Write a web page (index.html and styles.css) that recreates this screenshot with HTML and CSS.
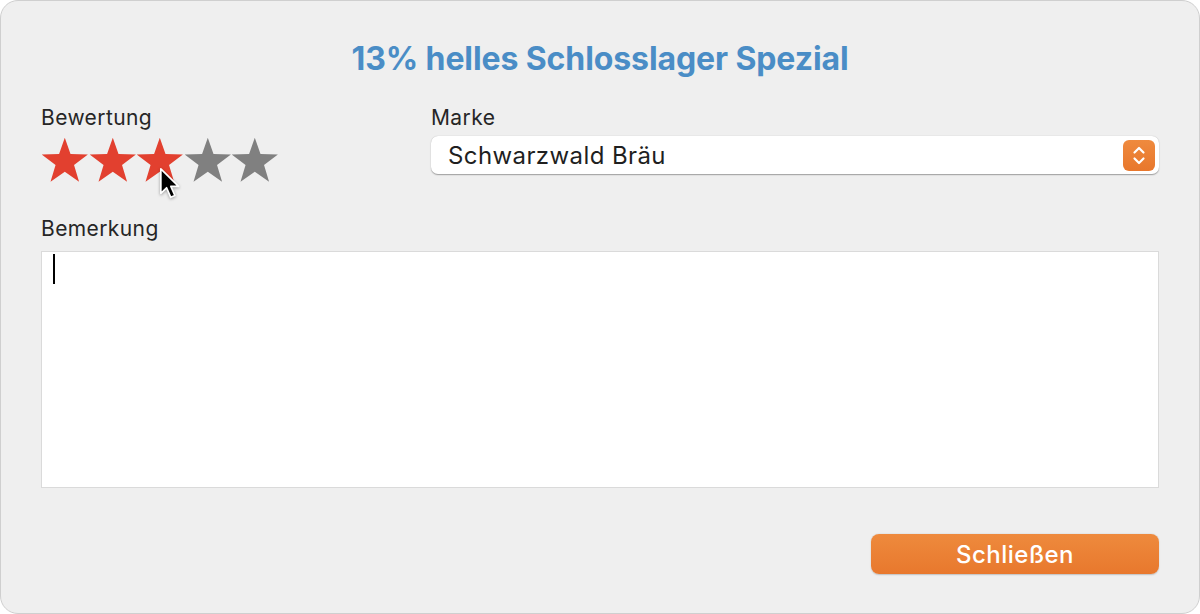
FILE: index.html
```html
<!DOCTYPE html>
<html lang="de">
<head>
    <meta charset="UTF-8">
    <meta name="viewport" content="width=device-width, initial-scale=1.0">
    <title>13% helles Schlosslager Spezial</title>
    <link rel="stylesheet" href="styles.css">
</head>
<body>

    <div class="window">
        <h1 class="title">13% helles Schlosslager Spezial</h1>

        <div class="row">
            <div class="rating-col">
                <div class="label">Bewertung</div>
                <div class="stars">
                    <svg class="star on" viewBox="0 0 48 46"><polygon points="24,0.5 29.76,17.07 47.3,17.43 33.32,28.03 38.4,44.82 24,34.8 9.6,44.82 14.68,28.03 0.7,17.43 18.24,17.07"/></svg>
                    <svg class="star on" viewBox="0 0 48 46"><polygon points="24,0.5 29.76,17.07 47.3,17.43 33.32,28.03 38.4,44.82 24,34.8 9.6,44.82 14.68,28.03 0.7,17.43 18.24,17.07"/></svg>
                    <svg class="star on" viewBox="0 0 48 46"><polygon points="24,0.5 29.76,17.07 47.3,17.43 33.32,28.03 38.4,44.82 24,34.8 9.6,44.82 14.68,28.03 0.7,17.43 18.24,17.07"/></svg>
                    <svg class="star" viewBox="0 0 48 46"><polygon points="24,0.5 29.76,17.07 47.3,17.43 33.32,28.03 38.4,44.82 24,34.8 9.6,44.82 14.68,28.03 0.7,17.43 18.24,17.07"/></svg>
                    <svg class="star" viewBox="0 0 48 46"><polygon points="24,0.5 29.76,17.07 47.3,17.43 33.32,28.03 38.4,44.82 24,34.8 9.6,44.82 14.68,28.03 0.7,17.43 18.24,17.07"/></svg>

                    <!-- Mauszeiger über dem dritten Stern -->
                    <svg class="cursor" viewBox="0 0 18 27">
                        <path d="M1.5,1.5 L1.5,21.5 L6.2,17 L9.6,24.8 L13,23.3 L9.7,15.8 L16,15.8 Z" fill="#000" stroke="#fff" stroke-width="1.4" stroke-linejoin="round"/>
                    </svg>
                </div>
            </div>

            <div class="brand-col">
                <div class="label">Marke</div>
                <div class="popup">
                    <span class="popup-text">Schwarzwald Bräu</span>
                    <span class="stepper">
                        <svg viewBox="0 0 32 31" width="32" height="31">
                            <polyline points="11.5,12.5 16,8 20.5,12.5" fill="none" stroke="#fff" stroke-width="2.2" stroke-linecap="round" stroke-linejoin="round"/>
                            <polyline points="11.5,18.5 16,23 20.5,18.5" fill="none" stroke="#fff" stroke-width="2.2" stroke-linecap="round" stroke-linejoin="round"/>
                        </svg>
                    </span>
                </div>
            </div>
        </div>

        <div class="label note-label">Bemerkung</div>
        <div class="note"><span class="caret"></span></div>

        <div class="actions">
            <button class="close-btn" type="button">Schließen</button>
        </div>
    </div>

</body>
</html>
```

FILE: styles.css
```css
html, body {
    margin: 0;
    padding: 0;
    background: #fff;
}

body {
    font-family: 'Inter', 'Noto Sans', sans-serif;
    color: #262626;
}

.window {
    box-sizing: border-box;
    width: 1200px;
    height: 614px;
    background: #efefef;
    border: 1px solid #cfcfcf;
    border-radius: 18px;
    padding: 40px 40px 0 40px;
    display: flex;
    flex-direction: column;
}

.title {
    margin: 0 0 29px 0;
    font-size: 32px;
    line-height: 36px;
    font-weight: 700;
    color: #4a8dc6;
    text-align: center;
    letter-spacing: -0.1px;
}

.label {
    font-size: 21px;
    line-height: 23px;
    letter-spacing: 0.4px;
    color: #262626;
}

.row {
    display: flex;
}

.rating-col {
    width: 390px;
    flex-shrink: 0;
}

.brand-col {
    flex: 1;
}

.stars {
    position: relative;
    display: flex;
    margin-top: 8px;
}

.star {
    width: 47.6px;
    height: 46px;
    fill: #808080;
}

.star.on {
    fill: #e2402f;
}

.cursor {
    position: absolute;
    left: 118px;
    top: 30px;
    width: 22px;
    height: 33px;
    filter: drop-shadow(0 1px 1.5px rgba(0, 0, 0, 0.35));
}

.popup {
    margin-top: 7px;
    height: 38px;
    background: #fff;
    border-radius: 7px;
    box-shadow: 0 0.5px 1px rgba(0, 0, 0, 0.25), 0 1px 2px rgba(0, 0, 0, 0.12);
    display: flex;
    align-items: center;
    justify-content: space-between;
    padding: 0 4px 0 17px;
}

.popup-text {
    font-size: 24px;
    letter-spacing: 0.4px;
    color: #1f1f1f;
}

.stepper {
    width: 32px;
    height: 31px;
    border-radius: 6px;
    background: linear-gradient(180deg, #ef8a3e 0%, #e8772c 100%);
    display: flex;
}

.note-label {
    margin-top: 34px;
}

.note {
    margin-top: 11px;
    height: 231px;
    background: #fff;
    border: 1px solid #dadada;
    padding: 2px 11px;
}

.caret {
    display: block;
    width: 2px;
    height: 30px;
    background: #000;
}

.actions {
    display: flex;
    justify-content: flex-end;
    margin-top: 46px;
}

.close-btn {
    width: 288px;
    height: 40px;
    border: none;
    border-radius: 8px;
    background: linear-gradient(180deg, #ee8a3d 0%, #e8782d 100%);
    box-shadow: 0 0.5px 1.5px rgba(0, 0, 0, 0.2);
    color: #fff;
    font-family: 'Inter', 'Noto Sans', sans-serif;
    font-size: 24px;
    letter-spacing: 0.5px;
    font-weight: 500;
    cursor: pointer;
}
```
